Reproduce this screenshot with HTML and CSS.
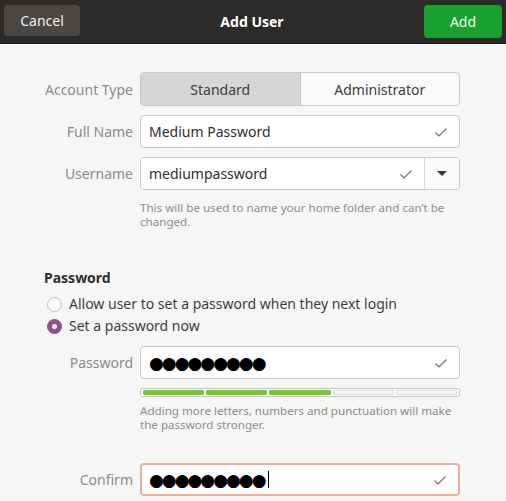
FILE: index.html
```html
<!DOCTYPE html>
<html>
<head>
<meta charset="utf-8">
<link rel="stylesheet" href="styles.css">
</head>
<body>
<div class="dialog">
  <header class="headerbar">
    <button class="hb-btn cancel">Cancel</button>
    <div class="title">Add User</div>
    <button class="hb-btn add">Add</button>
  </header>
  <main class="content">
    <div class="form">
      <div class="label">Account Type</div>
      <div class="toggle">
        <div class="seg active">Standard</div>
        <div class="seg">Administrator</div>
      </div>

      <div class="label">Full Name</div>
      <div class="entry"><span class="val">Medium Password</span><svg class="check" viewBox="0 0 16 16"><path d="M2.5 8.5 L6 12 L13.5 4.5" fill="none" stroke="#6f6f6f" stroke-width="1.2"/></svg></div>

      <div class="label">Username</div>
      <div class="combo">
        <div class="entry inner"><span class="val">mediumpassword</span><svg class="check" viewBox="0 0 16 16"><path d="M2.5 8.5 L6 12 L13.5 4.5" fill="none" stroke="#6f6f6f" stroke-width="1.2"/></svg></div>
        <div class="drop"><svg viewBox="0 0 10 6" class="tri"><path d="M0 0 H10 L5 5 Z" fill="#333"/></svg></div>
      </div>

      <div></div>
      <div class="help">This will be used to name your home folder and can’t be changed.</div>
    </div>

    <div class="section">Password</div>
    <div class="radios">
      <label class="radio"><span class="dot"></span>Allow user to set a password when they next login</label>
      <label class="radio"><span class="dot on"></span>Set a password now</label>
    </div>

    <div class="form pw">
      <div class="label">Password</div>
      <div class="entry"><span class="val dots">●●●●●●●●●</span><svg class="check" viewBox="0 0 16 16"><path d="M2.5 8.5 L6 12 L13.5 4.5" fill="none" stroke="#6f6f6f" stroke-width="1.2"/></svg></div>

      <div></div>
      <div class="strength">
        <span class="bar full"></span><span class="bar full"></span><span class="bar full"></span><span class="bar"></span><span class="bar"></span>
      </div>

      <div></div>
      <div class="help">Adding more letters, numbers and punctuation will make the password stronger.</div>

      <div class="label confirm-label">Confirm</div>
      <div class="entry focus confirm"><span class="val dots">●●●●●●●●●<span class="caret"></span></span><svg class="check" viewBox="0 0 16 16"><path d="M2.5 8.5 L6 12 L13.5 4.5" fill="none" stroke="#6f6f6f" stroke-width="1.2"/></svg></div>
    </div>
  </main>
</div>
</body>
</html>
```

FILE: styles.css
```css
* { box-sizing: border-box; }
html, body { margin: 0; padding: 0; }
body {
  width: 506px;
  height: 501px;
  overflow: hidden;
  background: #f6f6f6;
  font-family: "Noto Sans", "DejaVu Sans", sans-serif;
  font-size: 14px;
  color: #3d3d3d;
}
.headerbar {
  height: 44px;
  background: #2c2a29;
  display: flex;
  align-items: center;
  justify-content: space-between;
  padding: 0 4px;
  border-bottom: 1px solid #1e1d1c;
}
.hb-btn {
  font: inherit;
  font-size: 14px;
  color: #f0f0f0;
  border: none;
  border-radius: 4px;
  cursor: default;
}
.cancel {
  width: 76px;
  height: 31px;
  background: #4a4644;
  margin-top: -2px;
}
.add {
  width: 78px;
  height: 33px;
  background: #17a12f;
  color: #f3fbf3;
}
.title {
  color: #ffffff;
  font-weight: bold;
  font-size: 14px;
}
.content {
  padding: 28px 46px 0 44px;
}
.form {
  display: grid;
  grid-template-columns: 89px 320px;
  column-gap: 7px;
  row-gap: 9px;
  align-items: center;
}
.label {
  text-align: right;
  color: #8a8a8a;
}
.toggle {
  display: flex;
  height: 34px;
  border: 1px solid #cdc7c2;
  border-radius: 4px;
  overflow: hidden;
  background: #fafafa;
}
.seg {
  flex: 1;
  display: flex;
  align-items: center;
  justify-content: center;
  color: #3d3d3d;
}
.seg.active {
  background: #d6d6d6;
  border-right: 1px solid #cdc7c2;
}
.entry {
  height: 33px;
  background: #ffffff;
  border: 1px solid #cdc7c2;
  border-radius: 4px;
  display: flex;
  align-items: center;
  justify-content: space-between;
  padding: 0 10px 0 8px;
  color: #2e2e2e;
}
.check { width: 16px; height: 16px; }
.combo {
  display: flex;
  height: 33px;
  border: 1px solid #cdc7c2;
  border-radius: 4px;
  background: #fff;
  overflow: hidden;
}
.combo .inner {
  flex: 1;
  border: none;
  border-radius: 0;
  height: 31px;
}
.drop {
  width: 35px;
  border-left: 1px solid #dcd8d4;
  background: #fafafa;
  display: flex;
  align-items: center;
  justify-content: center;
}
.tri { width: 10px; height: 6px; }
.help {
  font-size: 11.6px;
  line-height: 14px;
  color: #8b8b8b;
  margin-top: 2px;
}
.section {
  margin-top: 39px;
  font-weight: bold;
  color: #2e2e2e;
  line-height: 20px;
}
.radios {
  margin-top: 6px;
  display: flex;
  flex-direction: column;
  gap: 2px;
}
.radio {
  display: flex;
  align-items: center;
  gap: 7px;
  line-height: 20px;
  color: #3d3d3d;
}
.dot {
  width: 15px;
  height: 15px;
  border-radius: 50%;
  border: 1px solid #c3bdb8;
  background: #fdfdfd;
  margin-left: 3px;
  position: relative;
}
.dot.on {
  background: #924d8b;
  border-color: #924d8b;
}
.dot.on::after {
  content: "";
  position: absolute;
  left: 4px;
  top: 4px;
  width: 5px;
  height: 5px;
  border-radius: 50%;
  background: #fff;
}
.form.pw {
  margin-top: 10px;
  row-gap: 0;
}
.dots {
  font-family: "DejaVu Sans", sans-serif;
  font-size: 17px;
  color: #000;
  letter-spacing: -2px;
  display: flex;
  align-items: center;
}
.strength {
  margin-top: 9px;
  height: 9px;
  border: 1px solid #c8c3bf;
  border-radius: 3px;
  background: #fff;
  display: flex;
  gap: 2px;
  padding: 1px 2px;
}
.bar {
  flex: 1;
  background: #f7f7f7;
  border: 1px solid #dedad7;
  border-radius: 1px;
}
.bar.full {
  background: #79c730;
  border-color: #79c730;
}
.pw .help { margin-top: 7px; }
.confirm-label { margin-top: 31px; }
.confirm {
  margin-top: 31px;
  border: 2px solid #e9ad98;
  padding-left: 7px;
}
.caret {
  display: inline-block;
  width: 1px;
  height: 17px;
  background: #000;
  margin-left: 3px;
}
```
